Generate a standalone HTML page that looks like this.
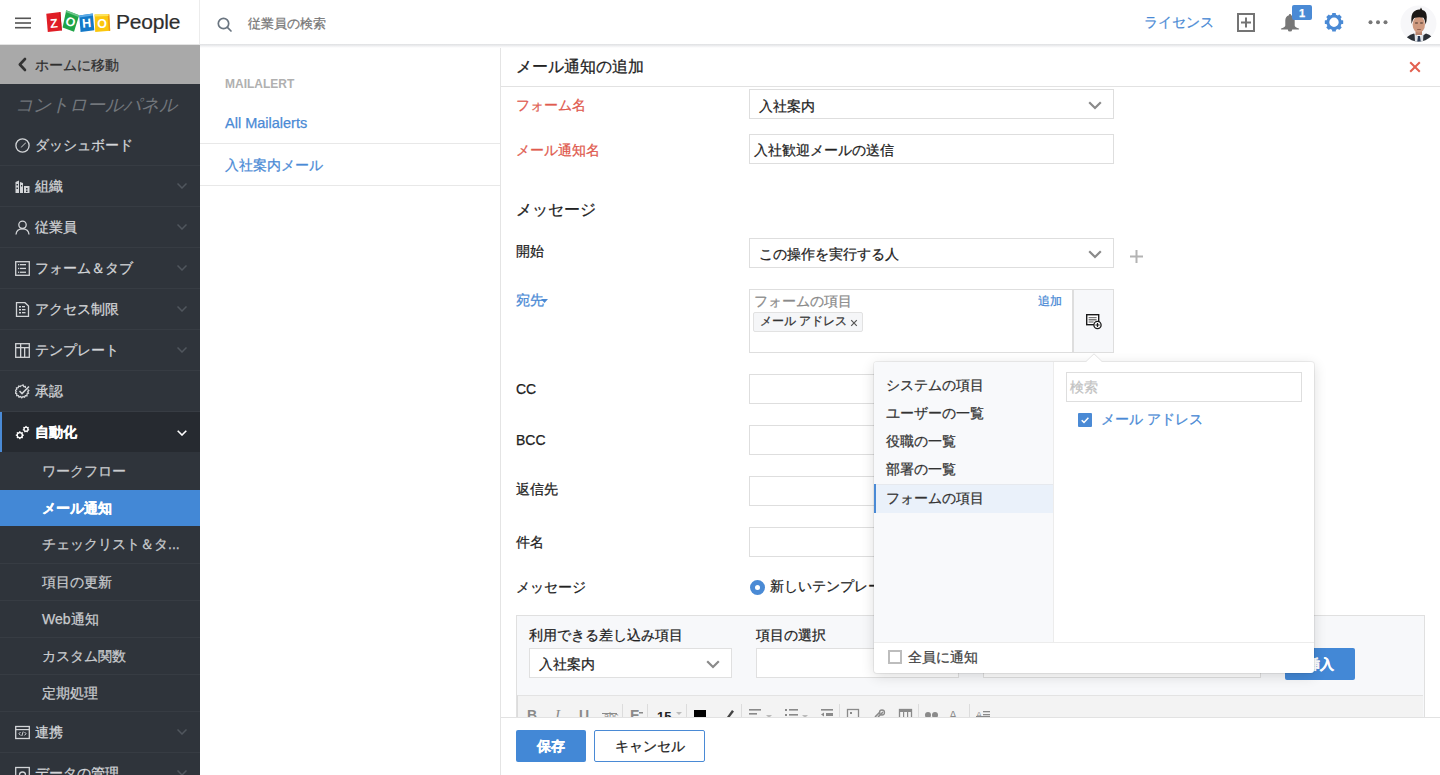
<!DOCTYPE html>
<html lang="ja">
<head>
<meta charset="utf-8">
<style>
*{box-sizing:border-box;margin:0;padding:0}
html,body{width:1440px;height:775px;overflow:hidden;background:#fff}
body{font-family:"Liberation Sans",sans-serif;font-size:14px;color:#222;position:relative;-webkit-text-stroke-width:0.25px}
.a{position:absolute}
/* header */
#hdr{left:0;top:0;width:1440px;height:44px;background:#fff;z-index:5}
#hdrsh{left:0;top:44px;width:1440px;height:4px;background:linear-gradient(#dfe0e2,#ebecee 40%,#f8f8f9 75%,#fff);z-index:4}
/* sidebar */
#side{left:0;top:44px;width:200px;height:731px;background:#2f343b;z-index:6}
.srow{position:absolute;left:0;width:200px;height:41px;border-bottom:1px solid #373c43;color:#d3d5d8;font-size:14px;line-height:41px}
.srow .ic{position:absolute;left:15px;top:13px;width:15px;height:15px}
.srow .tx{position:absolute;left:35px;top:0}
.srow .chev{position:absolute;left:177px;top:17px;width:10px;height:6px}
.sub{position:absolute;left:0;width:200px;height:37px;color:#c9cbce;font-size:14px;line-height:37px;border-bottom:1px solid #373c43}
.sub .tx{position:absolute;left:42px;top:0}
/* middle */
#mid{left:200px;top:47px;width:301px;height:728px;background:#fff;border-right:1px solid #e4e4e4}
/* form */
.lbl{position:absolute;left:516px;font-size:14px;color:#222}
.inp{position:absolute;left:749px;width:365px;height:30px;border:1px solid #dedede;background:#fff}
.chv{position:absolute;width:12px;height:8px}
</style>
</head>
<body>
<!-- HEADER -->
<div id="hdr" class="a">
  <svg class="a" style="left:15px;top:17px" width="16" height="12" viewBox="0 0 16 12"><rect x="0" y="0.5" width="16" height="1.6" fill="#555"/><rect x="0" y="5.2" width="16" height="1.6" fill="#555"/><rect x="0" y="9.9" width="16" height="1.6" fill="#555"/></svg>
  <!-- zoho logo -->
  <svg class="a" style="left:0;top:0" width="115" height="40" viewBox="0 0 115 40">
    <polygon points="46.3,13.8 60.4,12 61.8,30.4 47.8,31.9" fill="#e01e26"/>
    <polygon points="59.5,12.2 60.4,12 61.8,30.4 60.8,30.5" fill="#b3121a"/>
    <polygon points="66.2,10.2 79.2,15.2 74,31.8 62.6,27.4" fill="#1ea447"/>
    <polygon points="66.2,10.2 79.2,15.2 78.6,17 65.7,12" fill="#6cc48a"/>
    <polygon points="79.2,15.6 92.8,13.4 94.3,30.2 80.6,31.9" fill="#1479c8"/>
    <polygon points="79.2,15.6 92.8,13.4 93,15.4 79.4,17.5" fill="#5aaae6"/>
    <polygon points="94.6,14.6 109,14.2 110.2,30.8 95.2,31.9" fill="#fbc70d"/>
    <polygon points="107.8,14.6 109.4,14.2 110.2,30.8 108.8,31" fill="#ef9a12"/>
    <polygon points="94.6,14.6 108.5,14.2 108.5,16 94.6,16.4" fill="#fde45a"/>
    <g font-family="Liberation Sans" font-weight="bold" font-size="12.5" fill="#fff" text-anchor="middle">
      <text x="53.8" y="27.6" transform="rotate(-5 53.8 22)">Z</text>
      <text x="70.8" y="26.2" transform="rotate(20 70.8 21)">O</text>
      <text x="86.6" y="27.4" transform="rotate(-5 86.6 22.5)">H</text>
      <text x="102.2" y="27.8">O</text>
    </g>
  </svg>
  <div class="a" style="left:116px;top:10px;font-size:21px;color:#2e2e2e;letter-spacing:-0.2px;-webkit-text-stroke:0.2px #2e2e2e">People</div>
  <div class="a" style="left:199px;top:0;width:1px;height:44px;background:#ececec"></div>
  <svg class="a" style="left:217px;top:17px" width="16" height="16" viewBox="0 0 16 16"><circle cx="6.5" cy="6.5" r="5.2" fill="none" stroke="#6a7580" stroke-width="1.7"/><line x1="10.4" y1="10.4" x2="14" y2="14" stroke="#6a7580" stroke-width="1.7" stroke-linecap="round"/></svg>
  <div class="a" style="left:248px;top:15px;font-size:13px;color:#777">従業員の検索</div>
  <div class="a" style="left:1144px;top:14px;font-size:14px;color:#4a8ad5;-webkit-text-stroke:0.2px #4a8ad5">ライセンス</div>
  <svg class="a" style="left:1237px;top:13px" width="18" height="19" viewBox="0 0 18 19"><rect x="1" y="1" width="16" height="17" fill="none" stroke="#747474" stroke-width="2"/><rect x="8" y="4.5" width="2" height="10" fill="#747474"/><rect x="4" y="8.5" width="10" height="2" fill="#747474"/></svg>
  <svg class="a" style="left:1280px;top:13px" width="20" height="19" viewBox="0 0 20 19"><path d="M10 1 C9.2 1 8.9 1.6 8.9 2.3 C6.4 2.9 5.3 5 5.3 7.6 V12.6 C5.3 13.6 4.3 14.7 1.2 15.4 C0.6 15.6 0.8 16.4 1.4 16.4 H18.6 C19.2 16.4 19.4 15.6 18.8 15.4 C15.7 14.7 14.7 13.6 14.7 12.6 V7.6 C14.7 5 13.6 2.9 11.1 2.3 C11.1 1.6 10.8 1 10 1z M7.8 16.4 A2.2 2.2 0 0 0 12.2 16.4z" fill="#777"/></svg>
  <div class="a" style="left:1292px;top:5px;width:20px;height:15px;background:#4a8ad5;border-radius:2px;color:#fff;font-size:11px;font-weight:bold;text-align:center;line-height:17px">1</div>
  <svg class="a" style="left:1324px;top:12px" width="20" height="20" viewBox="0 0 20 20"><g fill="#4a8ad5" transform="translate(10 10.2)"><circle r="6.2" fill="none" stroke="#4a8ad5" stroke-width="3"/><rect x="-1.9" y="-9.2" width="3.8" height="4" rx="0.5" transform="rotate(0)"/><rect x="-1.9" y="-9.2" width="3.8" height="4" rx="0.5" transform="rotate(45)"/><rect x="-1.9" y="-9.2" width="3.8" height="4" rx="0.5" transform="rotate(90)"/><rect x="-1.9" y="-9.2" width="3.8" height="4" rx="0.5" transform="rotate(135)"/><rect x="-1.9" y="-9.2" width="3.8" height="4" rx="0.5" transform="rotate(180)"/><rect x="-1.9" y="-9.2" width="3.8" height="4" rx="0.5" transform="rotate(225)"/><rect x="-1.9" y="-9.2" width="3.8" height="4" rx="0.5" transform="rotate(270)"/><rect x="-1.9" y="-9.2" width="3.8" height="4" rx="0.5" transform="rotate(315)"/></g></svg>
  <svg class="a" style="left:1368px;top:19px" width="20" height="6" viewBox="0 0 20 6"><circle cx="2.5" cy="3.3" r="2" fill="#777"/><circle cx="10" cy="3.3" r="2" fill="#777"/><circle cx="17.5" cy="3.3" r="2" fill="#777"/></svg>
  <svg class="a" style="left:1400px;top:5px" width="37" height="37" viewBox="0 0 37 37">
    <defs><clipPath id="av"><circle cx="18.5" cy="18.5" r="18"/></clipPath></defs>
    <g clip-path="url(#av)">
      <rect width="37" height="37" fill="#f7f7f9"/>
      <path d="M4 37 Q6 30.5 14 28.5 L19 33 L26 28.5 Q33 30.5 35 37z" fill="#2b3037"/>
      <path d="M14.5 28 L19 33.5 L23.5 28 L23 37 L15 37z" fill="#dfe3e8"/>
      <path d="M18 31 L20 31 L20.8 37 L17.2 37z" fill="#2a3a55"/>
      <rect x="15.5" y="23" width="6.5" height="7" fill="#b98670"/>
      <ellipse cx="18.8" cy="19.5" rx="6.2" ry="8.3" fill="#cf9a80"/>
      <path d="M11.5 19 Q10.5 9 14 6.5 Q17 4 20 4.5 L21 2.5 L22.3 5 Q26.8 6 26.8 12 Q26.8 16 25.6 19.5 Q25 14.5 23.5 12.8 Q19 11.5 14.2 13 Q12.6 14.5 11.5 19z" fill="#1b1816"/>
      <path d="M15.2 18 h2.6 M20.2 18 h2.6" stroke="#3a2a22" stroke-width="1"/>
      <path d="M17.2 24.5 h3.6" stroke="#8a5a4a" stroke-width="0.9"/>
    </g>
  </svg>
</div>
<div id="hdrsh" class="a"></div>

<!-- SIDEBAR -->
<div id="side" class="a">
  <div class="a" style="left:0;top:0;width:200px;height:1px;background:#e3e3e3"></div><div class="a" style="left:0;top:1px;width:200px;height:39px;background:#a9a9a9"></div>
  <svg class="a" style="left:17px;top:13px" width="10" height="15" viewBox="0 0 10 15"><path d="M8 2 L2.8 7.5 L8 13" fill="none" stroke="#333" stroke-width="2.6" stroke-linecap="round" stroke-linejoin="round"/></svg>
  <div class="a" style="left:35px;top:13px;font-size:14px;color:#2e2e2e">ホームに移動</div>
  <div class="a" style="left:15px;top:49px;font-size:18px;color:#72767b;font-style:italic;-webkit-text-stroke-width:0">コントロールパネル</div>
  <!-- rows -->
  <div class="srow" style="top:81px"><svg class="ic" viewBox="0 0 15 15"><circle cx="7.5" cy="7.5" r="6.6" fill="none" stroke="#d3d5d8" stroke-width="1.3"/><path d="M10.5 4.5 L6.5 8.5 L5.5 10 L7 9 L11 5z" fill="#d3d5d8"/></svg><span class="tx">ダッシュボード</span></div>
  <div class="srow" style="top:122px"><svg class="ic" viewBox="0 0 15 15"><path d="M0.5 3 L4 1.5 V14 H0.5z M5 3 L8 4 V14 H5z M9 7 H14.5 V14 H9z" fill="#d3d5d8"/><rect x="1.5" y="5" width="1.5" height="1.5" fill="#2f343b"/><rect x="1.5" y="8.5" width="1.5" height="1.5" fill="#2f343b"/><rect x="6" y="6" width="1.2" height="1.5" fill="#2f343b"/><rect x="11" y="9" width="1.5" height="1.5" fill="#2f343b"/><rect x="11" y="11.5" width="1.5" height="1.5" fill="#2f343b"/></svg><span class="tx">組織</span><svg class="chev" viewBox="0 0 10 6"><path d="M0.5 0.5 L5 5 L9.5 0.5" fill="none" stroke="#50565d" stroke-width="1.5"/></svg></div>
  <div class="srow" style="top:163px"><svg class="ic" viewBox="0 0 15 15"><circle cx="7.5" cy="4.8" r="3.7" fill="none" stroke="#d3d5d8" stroke-width="1.3"/><path d="M1 14.5 Q1.5 8.8 7.5 8.8 Q13.5 8.8 14 14.5" fill="none" stroke="#d3d5d8" stroke-width="1.3"/></svg><span class="tx">従業員</span><svg class="chev" viewBox="0 0 10 6"><path d="M0.5 0.5 L5 5 L9.5 0.5" fill="none" stroke="#50565d" stroke-width="1.5"/></svg></div>
  <div class="srow" style="top:204px"><svg class="ic" viewBox="0 0 15 15"><rect x="0.7" y="0.7" width="13.6" height="13.6" fill="none" stroke="#d3d5d8" stroke-width="1.3"/><rect x="5" y="3" width="6" height="1.3" fill="#d3d5d8"/><rect x="5" y="6.8" width="6" height="1.3" fill="#d3d5d8"/><rect x="5" y="10.6" width="6" height="1.3" fill="#d3d5d8"/><rect x="3" y="3" width="1.2" height="1.3" fill="#d3d5d8"/><rect x="3" y="6.8" width="1.2" height="1.3" fill="#d3d5d8"/><rect x="3" y="10.6" width="1.2" height="1.3" fill="#d3d5d8"/></svg><span class="tx">フォーム＆タブ</span><svg class="chev" viewBox="0 0 10 6"><path d="M0.5 0.5 L5 5 L9.5 0.5" fill="none" stroke="#50565d" stroke-width="1.5"/></svg></div>
  <div class="srow" style="top:245px"><svg class="ic" viewBox="0 0 15 15"><path d="M1.5 0.7 H10 L13.5 4 V14.3 H1.5z" fill="none" stroke="#d3d5d8" stroke-width="1.3"/><rect x="4" y="4" width="2" height="1.5" fill="#d3d5d8"/><rect x="7" y="4" width="3" height="1.3" fill="#d3d5d8"/><rect x="4" y="7" width="2" height="1.5" fill="#d3d5d8"/><rect x="7" y="7" width="3.5" height="1.3" fill="#d3d5d8"/><rect x="4" y="10" width="2" height="1.5" fill="#d3d5d8"/><rect x="7" y="10" width="3.5" height="1.3" fill="#d3d5d8"/></svg><span class="tx">アクセス制限</span><svg class="chev" viewBox="0 0 10 6"><path d="M0.5 0.5 L5 5 L9.5 0.5" fill="none" stroke="#50565d" stroke-width="1.5"/></svg></div>
  <div class="srow" style="top:286px"><svg class="ic" viewBox="0 0 15 15"><rect x="0.7" y="0.7" width="13.6" height="13.6" fill="none" stroke="#d3d5d8" stroke-width="1.3"/><rect x="0.7" y="4" width="13.6" height="1.3" fill="#d3d5d8"/><rect x="5" y="0.7" width="1.3" height="13.6" fill="#d3d5d8"/><rect x="9" y="4" width="1.3" height="10" fill="#d3d5d8"/></svg><span class="tx">テンプレート</span><svg class="chev" viewBox="0 0 10 6"><path d="M0.5 0.5 L5 5 L9.5 0.5" fill="none" stroke="#50565d" stroke-width="1.5"/></svg></div>
  <div class="srow" style="top:327px"><svg class="ic" viewBox="0 0 15 15"><path d="M7 1.5 L8 1 L8.7 2.6 L10.3 2.4 L10.5 4 M12.6 5.5 L13.8 6.5 L12.7 7.8 L13.5 9.3 L12 10 L12 11.7 L10.3 11.6 L9.6 13.2 L8 12.6 L6.8 13.8 L5.6 12.6 L4 13.2 L3.4 11.6 L1.7 11.6 L1.8 9.9 L0.4 9.2 L1.2 7.6 L0.3 6.3 L1.7 5.4 L1.5 3.8 L3.2 3.6 L3.8 2 L5.3 2.6 L6.5 1.3" fill="none" stroke="#d3d5d8" stroke-width="1.3"/><path d="M4.5 7 L7 9.5 L14 2.5" fill="none" stroke="#d3d5d8" stroke-width="1.6"/></svg><span class="tx">承認</span></div>
  <div class="srow" style="top:368px;background:#262a30;height:40px;line-height:40px;border-bottom:none"><div class="a" style="left:0;top:0;width:2px;height:40px;background:#4a8ad5"></div><svg class="ic" viewBox="0 0 15 15"><circle cx="4.8" cy="10.2" r="2.6" fill="none" stroke="#fff" stroke-width="1.3"/><rect x="4.1499999999999995" y="6.199999999999999" width="1.3" height="2.0" fill="#fff" transform="rotate(0.0 4.8 10.2)"/><rect x="4.1499999999999995" y="6.199999999999999" width="1.3" height="2.0" fill="#fff" transform="rotate(45.0 4.8 10.2)"/><rect x="4.1499999999999995" y="6.199999999999999" width="1.3" height="2.0" fill="#fff" transform="rotate(90.0 4.8 10.2)"/><rect x="4.1499999999999995" y="6.199999999999999" width="1.3" height="2.0" fill="#fff" transform="rotate(135.0 4.8 10.2)"/><rect x="4.1499999999999995" y="6.199999999999999" width="1.3" height="2.0" fill="#fff" transform="rotate(180.0 4.8 10.2)"/><rect x="4.1499999999999995" y="6.199999999999999" width="1.3" height="2.0" fill="#fff" transform="rotate(225.0 4.8 10.2)"/><rect x="4.1499999999999995" y="6.199999999999999" width="1.3" height="2.0" fill="#fff" transform="rotate(270.0 4.8 10.2)"/><rect x="4.1499999999999995" y="6.199999999999999" width="1.3" height="2.0" fill="#fff" transform="rotate(315.0 4.8 10.2)"/><circle cx="11" cy="4.2" r="2.1" fill="none" stroke="#fff" stroke-width="1.2"/><rect x="10.45" y="0.9000000000000001" width="1.1" height="1.7999999999999998" fill="#fff" transform="rotate(0.0 11 4.2)"/><rect x="10.45" y="0.9000000000000001" width="1.1" height="1.7999999999999998" fill="#fff" transform="rotate(51.42857142857143 11 4.2)"/><rect x="10.45" y="0.9000000000000001" width="1.1" height="1.7999999999999998" fill="#fff" transform="rotate(102.85714285714286 11 4.2)"/><rect x="10.45" y="0.9000000000000001" width="1.1" height="1.7999999999999998" fill="#fff" transform="rotate(154.28571428571428 11 4.2)"/><rect x="10.45" y="0.9000000000000001" width="1.1" height="1.7999999999999998" fill="#fff" transform="rotate(205.71428571428572 11 4.2)"/><rect x="10.45" y="0.9000000000000001" width="1.1" height="1.7999999999999998" fill="#fff" transform="rotate(257.14285714285717 11 4.2)"/><rect x="10.45" y="0.9000000000000001" width="1.1" height="1.7999999999999998" fill="#fff" transform="rotate(308.57142857142856 11 4.2)"/></svg><span class="tx" style="color:#fff;font-weight:bold">自動化</span><svg class="chev" style="top:18px" viewBox="0 0 10 6"><path d="M0.7 0.7 L5 5 L9.3 0.7" fill="none" stroke="#fff" stroke-width="1.6"/></svg></div>
  <div class="sub" style="top:408px;height:38px;border-bottom:none;line-height:39px"><span class="tx">ワークフロー</span></div>
  <div class="sub" style="top:446px;background:#4388d6;color:#fff;font-weight:bold;border-bottom:none;height:36px;line-height:36px"><span class="tx">メール通知</span></div>
  <div class="sub" style="top:482px;height:38px"><span class="tx">チェックリスト＆タ...</span></div>
  <div class="sub" style="top:520px"><span class="tx">項目の更新</span></div>
  <div class="sub" style="top:557px"><span class="tx">Web通知</span></div>
  <div class="sub" style="top:594px"><span class="tx">カスタム関数</span></div>
  <div class="sub" style="top:631px"><span class="tx">定期処理</span></div>
  <div class="srow" style="top:668px"><svg class="ic" viewBox="0 0 15 15"><rect x="0.7" y="1.5" width="13.6" height="12" fill="none" stroke="#d3d5d8" stroke-width="1.3"/><rect x="0.7" y="4" width="13.6" height="1.2" fill="#d3d5d8"/><path d="M5.5 7 L4 8.7 L5.5 10.4 M9.5 7 L11 8.7 L9.5 10.4 M8.2 6.5 L6.8 11" fill="none" stroke="#d3d5d8" stroke-width="1"/></svg><span class="tx">連携</span><svg class="chev" viewBox="0 0 10 6"><path d="M0.5 0.5 L5 5 L9.5 0.5" fill="none" stroke="#50565d" stroke-width="1.5"/></svg></div>
  <div class="srow" style="top:709px"><svg class="ic" viewBox="0 0 15 15"><rect x="0.7" y="1.5" width="13.6" height="13" fill="none" stroke="#d3d5d8" stroke-width="1.3"/><circle cx="7.5" cy="9" r="3" fill="none" stroke="#d3d5d8" stroke-width="1.3"/></svg><span class="tx">データの管理</span><svg class="chev" viewBox="0 0 10 6"><path d="M0.5 0.5 L5 5 L9.5 0.5" fill="none" stroke="#50565d" stroke-width="1.5"/></svg></div>
</div>

<!-- MIDDLE -->
<div id="mid" class="a">
  <div class="a" style="left:25px;top:30px;font-size:12px;color:#b0b0b0;font-weight:bold;-webkit-text-stroke-width:0">MAILALERT</div>
  <div class="a" style="left:25px;top:68px;font-size:14.5px;color:#4a8ad5">All Mailalerts</div>
  <div class="a" style="left:0;top:96px;width:300px;height:1px;background:#e8e8e8"></div>
  <div class="a" style="left:25px;top:110px;font-size:14px;color:#4a8ad5">入社案内メール</div>
  <div class="a" style="left:0;top:138px;width:300px;height:1px;background:#e8e8e8"></div>
</div>

<!-- FORM -->
<div class="a" style="left:516px;top:57px;font-size:15.5px;color:#222">メール通知の追加</div>
<svg class="a" style="left:1409px;top:61px" width="12" height="12" viewBox="0 0 12 12"><path d="M1.2 1.2 L10.8 10.8 M10.8 1.2 L1.2 10.8" stroke="#e3604f" stroke-width="2"/></svg>
<div class="a" style="left:501px;top:86px;width:939px;height:1px;background:#e2e2e2"></div>

<div class="lbl" style="top:97px;color:#e05a4e">フォーム名</div>
<div class="inp" style="top:89px"><span class="a" style="left:9px;top:8px">入社案内</span><svg class="chv" style="left:338px;top:11px;width:14px;height:9px" viewBox="0 0 14 9"><path d="M1.2 1.2 L7 7 L12.8 1.2" fill="none" stroke="#8a8a8a" stroke-width="2.2"/></svg></div>

<div class="lbl" style="top:142px;color:#e05a4e">メール通知名</div>
<div class="inp" style="top:134px"><span class="a" style="left:4px;top:7px">入社歓迎メールの送信</span></div>

<div class="a" style="left:516px;top:200px;font-size:16px;color:#222">メッセージ</div>

<div class="lbl" style="top:243px">開始</div>
<div class="inp" style="top:238px"><span class="a" style="left:9px;top:7px">この操作を実行する人</span><svg class="chv" style="left:338px;top:11px;width:14px;height:9px" viewBox="0 0 14 9"><path d="M1.2 1.2 L7 7 L12.8 1.2" fill="none" stroke="#8a8a8a" stroke-width="2.2"/></svg></div>
<svg class="a" style="left:1129px;top:249px" width="15" height="15" viewBox="0 0 15 15"><path d="M7.5 1 V14 M1 7.5 H14" stroke="#b3b3b3" stroke-width="2"/></svg>

<div class="lbl" style="top:292px;color:#4a8ad5">宛先</div>
<svg class="a" style="left:541px;top:299px" width="7" height="5" viewBox="0 0 7 5"><path d="M0 0 H7 L3.5 4z" fill="#4a8ad5"/></svg>
<div class="a" style="left:749px;top:289px;width:365px;height:64px;border:1px solid #dedede;background:#fff">
  <span class="a" style="left:4px;top:3px;color:#8a8a8a">フォームの項目</span>
  <span class="a" style="left:288px;top:3px;color:#4a8ad5;font-size:12px">追加</span>
  <div class="a" style="left:3px;top:22px;width:110px;height:20px;border:1px solid #e2e2e2;background:#f5f6f8;border-radius:2px">
    <span class="a" style="left:6px;top:0px;font-size:12px;color:#333">メール アドレス</span>
    <svg class="a" style="left:96px;top:6px" width="8" height="8" viewBox="0 0 8 8"><path d="M1.2 1.2 L6.8 6.8 M6.8 1.2 L1.2 6.8" stroke="#555" stroke-width="1.2"/></svg>
  </div>
  <div class="a" style="left:322px;top:0;width:2px;height:62px;background:#dedede"></div>
  <div class="a" style="left:324px;top:0;width:39px;height:62px;background:#f7f8fa"></div>
  <svg class="a" style="left:336px;top:24px" width="17" height="16" viewBox="0 0 17 16"><rect x="0.7" y="0.7" width="12" height="10" fill="#fff" stroke="#1a1a1a" stroke-width="1.4"/><rect x="2.6" y="3" width="8" height="1.2" fill="#777"/><rect x="2.6" y="5.2" width="8" height="1.2" fill="#555"/><rect x="2.6" y="7.4" width="5" height="1.2" fill="#777"/><circle cx="11.5" cy="11" r="3.6" fill="#fff" stroke="#1a1a1a" stroke-width="1.3"/><path d="M11.5 8.9 V13.1 M9.4 11 H13.6" stroke="#1a1a1a" stroke-width="1.2"/></svg>
</div>

<div class="lbl" style="top:381px">CC</div>
<div class="inp" style="top:374px"></div>
<div class="lbl" style="top:432px">BCC</div>
<div class="inp" style="top:425px"></div>
<div class="lbl" style="top:481px">返信先</div>
<div class="inp" style="top:476px"></div>
<div class="lbl" style="top:534px">件名</div>
<div class="inp" style="top:527px"></div>
<div class="lbl" style="top:579px">メッセージ</div>
<div class="a" style="left:750px;top:580px;width:15px;height:15px;border-radius:50%;background:#4a8ad5"></div>
<div class="a" style="left:755px;top:585px;width:5px;height:5px;border-radius:50%;background:#fff"></div>
<div class="a" style="left:770px;top:578px;font-size:14px;color:#222">新しいテンプレート</div>

<!-- merge box -->
<div class="a" style="left:516px;top:615px;width:909px;height:110px;border:1px solid #e0e0e0;background:#f7f8fa"></div>
<div class="a" style="left:529px;top:627px;font-size:14px;color:#222">利用できる差し込み項目</div>
<div class="a" style="left:756px;top:627px;font-size:14px;color:#222">項目の選択</div>
<div class="a" style="left:529px;top:648px;width:203px;height:30px;border:1px solid #e0e0e0;background:#fff"><span class="a" style="left:9px;top:7px">入社案内</span><svg class="chv" style="left:176px;top:11px;width:14px;height:9px" viewBox="0 0 14 9"><path d="M1.2 1.2 L7 7 L12.8 1.2" fill="none" stroke="#8a8a8a" stroke-width="2.2"/></svg></div>
<div class="a" style="left:756px;top:648px;width:203px;height:30px;border:1px solid #e0e0e0;background:#fff"></div>
<div class="a" style="left:983px;top:648px;width:278px;height:30px;border:1px solid #e0e0e0;background:#fff"></div>
<div class="a" style="left:1285px;top:648px;width:70px;height:32px;background:#4388d6;border-radius:2px;color:#fff;font-weight:bold;text-align:center;line-height:32px">挿入</div>
<div class="a" style="left:517px;top:695px;width:906px;height:30px;background:#f3f3f3;border-top:1px solid #e3e3e3;border-left:1px solid #dcdcdc"></div>
<svg class="a" style="left:518px;top:696px" width="500" height="21" viewBox="0 0 500 21">
  <g fill="#8a8a8a" font-family="Liberation Sans" font-size="14">
    <text x="9" y="24" font-weight="bold">B</text>
    <text x="37" y="24" font-style="italic" font-family="Liberation Serif" font-size="15">I</text>
    <text x="61" y="24" font-weight="bold">U</text>
    <text x="86" y="23" font-size="9">abc</text>
    <rect x="84" y="17" width="15" height="1" />
    <rect x="104" y="8" width="1" height="13" fill="#dcdcdc"/>
    <text x="112" y="24" font-weight="bold" font-size="15">F</text>
    <rect x="121" y="16" width="4" height="1.5"/>
    <rect x="129" y="8" width="1" height="13" fill="#dcdcdc"/>
    <text x="139" y="25" font-size="13" fill="#222" font-weight="bold">15</text>
    <path d="M158 16 L164 16 L161 19z" fill="#bbb"/>
    <rect x="168" y="8" width="1" height="13" fill="#dcdcdc"/>
    <rect x="176" y="14" width="12" height="8" fill="#000"/>
    <path d="M209 21 L214 14 L216 15.5 L211 22z" fill="#444"/>
    <rect x="223" y="8" width="1" height="13" fill="#dcdcdc"/>
    <rect x="231" y="13" width="12" height="1.6"/><rect x="231" y="17" width="8" height="1.6"/>
    <path d="M248 19 L254 19 L251 22z" fill="#bbb"/>
    <rect x="267" y="13" width="2" height="2"/><rect x="271" y="13" width="9" height="1.6"/><rect x="267" y="18" width="2" height="2"/><rect x="271" y="18" width="9" height="1.6"/>
    <path d="M284 19 L290 19 L287 22z" fill="#bbb"/>
    <rect x="303" y="13" width="12" height="1.6"/><rect x="308" y="17" width="7" height="3"/><path d="M303 18.5 L306 16.5 L306 20.5z"/>
    <rect x="321" y="8" width="1" height="13" fill="#dcdcdc"/>
    <rect x="329.5" y="13.5" width="11" height="9" fill="none" stroke="#8a8a8a" stroke-width="1.3"/><rect x="332" y="16" width="2" height="2"/>
    <path d="M357 21 L362 16 M360 21 L365 16" stroke="#8a8a8a" stroke-width="1.6" fill="none"/><circle cx="364" cy="16.5" r="2.5" fill="none" stroke="#8a8a8a" stroke-width="1.3"/>
    <rect x="381.5" y="13.5" width="12" height="9" fill="none" stroke="#8a8a8a" stroke-width="1.3"/><rect x="381" y="13" width="13" height="3"/><rect x="385" y="13" width="1.2" height="9"/><rect x="389" y="13" width="1.2" height="9"/>
    <rect x="400" y="8" width="1" height="13" fill="#dcdcdc"/>
    <circle cx="410" cy="19" r="3"/><circle cx="417" cy="19" r="3"/>
    <text x="431" y="24" font-size="12">A</text>
    <rect x="451" y="8" width="1" height="13" fill="#dcdcdc"/>
    <text x="458" y="22" font-size="9">A</text><rect x="465" y="15" width="7" height="1.3"/><rect x="465" y="18" width="7" height="1.3"/><rect x="458" y="20" width="14" height="1.3"/>
  </g>
</svg>

<!-- footer -->
<div class="a" style="left:501px;top:717px;width:939px;height:58px;background:#fff;border-top:1px solid #e2e2e2"></div>
<div class="a" style="left:516px;top:730px;width:70px;height:32px;background:#4388d6;border-radius:2px;color:#fff;font-weight:bold;text-align:center;line-height:32px">保存</div>
<div class="a" style="left:594px;top:730px;width:111px;height:32px;border:1px solid #4a8ad5;border-radius:2px;color:#222;text-align:center;line-height:30px">キャンセル</div>


<!-- POPUP -->
<div class="a" style="left:874px;top:362px;width:440px;height:311px;background:#fff;border-radius:3px;box-shadow:0 0 0 1px rgba(0,0,0,0.06),0 3px 14px rgba(0,0,0,0.14);z-index:10;overflow:hidden">
  <div class="a" style="left:0;top:0;width:180px;height:280px;background:#f8f9fb;border-right:1px solid #ececec"></div>
  <div class="a" style="left:12px;top:15px;font-size:14px;color:#333">システムの項目</div>
  <div class="a" style="left:12px;top:43px;font-size:14px;color:#333">ユーザーの一覧</div>
  <div class="a" style="left:12px;top:71px;font-size:14px;color:#333">役職の一覧</div>
  <div class="a" style="left:12px;top:99px;font-size:14px;color:#333">部署の一覧</div>
  <div class="a" style="left:0;top:122px;width:179px;height:29px;background:#eaf1fa;border-top:1px solid #e6e9ee"></div>
  <div class="a" style="left:0;top:122px;width:2px;height:29px;background:#4a8ad5"></div>
  <div class="a" style="left:12px;top:128px;font-size:14px;color:#333">フォームの項目</div>
  <div class="a" style="left:192px;top:10px;width:236px;height:30px;border:1px solid #dedede;background:#fff"><span class="a" style="left:3px;top:6px;font-size:14px;color:#c2c2c2">検索</span></div>
  <div class="a" style="left:204px;top:51px;width:14px;height:14px;background:#4a8ad5;border-radius:1px"></div>
  <svg class="a" style="left:204px;top:51px" width="14" height="14" viewBox="0 0 14 14"><path d="M3.7 7.2 L6 9.4 L10.4 4.8" fill="none" stroke="#fff" stroke-width="1.5"/></svg>
  <div class="a" style="left:227px;top:49px;font-size:13.5px;color:#4a8ad5">メール アドレス</div>
  <div class="a" style="left:0;top:280px;width:440px;height:1px;background:#ececec"></div>
  <div class="a" style="left:14px;top:288px;width:14px;height:14px;border:2px solid #bdbdbd;background:#fff"></div>
  <div class="a" style="left:34px;top:287px;font-size:14px;color:#444">全員に通知</div>
</div>
<svg class="a" style="left:1085px;top:353px;z-index:11" width="18" height="10" viewBox="0 0 18 10"><path d="M0 9.5 L9 0.8 L18 9.5" fill="#fff" stroke="#e3e3e3" stroke-width="1"/><rect x="0" y="9" width="18" height="2" fill="#fff"/></svg>
</body>
</html>
